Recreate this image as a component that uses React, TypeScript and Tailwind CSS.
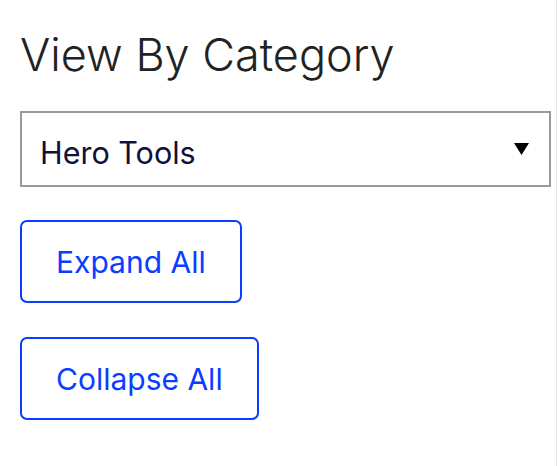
import React from "react";

export default function App() {
  return (
    <div
      className="w-[558px] h-[466px] bg-white flex"
      style={{ fontFamily: "Inter, 'Noto Sans', sans-serif" }}
    >
      <div className="w-[557px] border-r border-[#e6e6e6] pl-[20px] pt-[28px] flex flex-col items-start">
        <h2 className="text-[45px] leading-[54px] font-light text-[#222222]">
          View By Category
        </h2>
        <div className="mt-[29px] w-[531px] h-[76px] border-2 border-[#9a9a9a] flex items-center justify-between pl-[18px] pr-[20px] pt-[7px]">
          <span className="text-[30.5px] leading-[36px] text-[#10103a]">Hero Tools</span>
          <svg width="15" height="12" viewBox="0 0 15 12" className="-mt-[8px]">
            <polygon points="0,0 15,0 7.5,12" fill="#000" />
          </svg>
        </div>
        <button className="mt-[33px] h-[83px] px-[34px] border-2 border-[#0a3dff] rounded-[7px] text-[30px] leading-[36px] text-[#0a3dff] bg-white">
          Expand All
        </button>
        <button className="mt-[34px] h-[83px] px-[34px] border-2 border-[#0a3dff] rounded-[7px] text-[30px] leading-[36px] text-[#0a3dff] bg-white">
          Collapse All
        </button>
      </div>
    </div>
  );
}
